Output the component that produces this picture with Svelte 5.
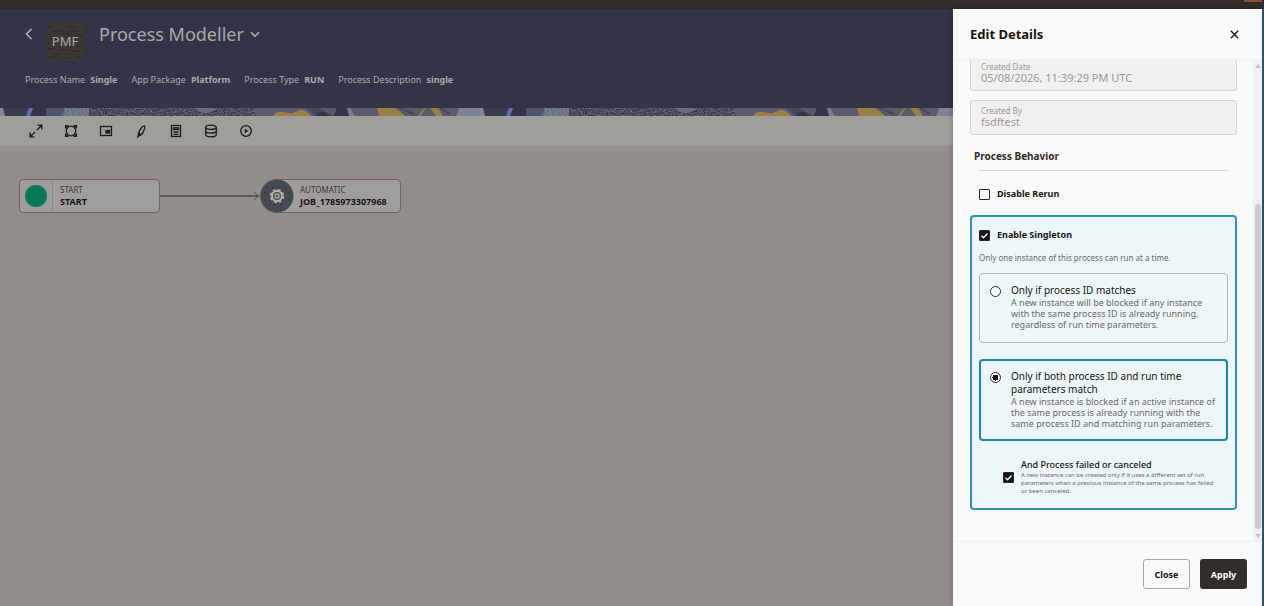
<script>
  const facts = [
    ['Process Name', 'Single'],
    ['App Package', 'Platform'],
    ['Process Type', 'RUN'],
    ['Process Description', 'single']
  ];
  let disableRerun = $state(false);
  let singleton = $state(true);
  let failed = $state(true);
  let mode = $state('both');
</script>

<div class="page">
  <div class="topbar"><span class="chip"></span></div>

  <div class="body">
    <main>
      <header>
        <div class="title-row">
          <button class="back" aria-label="Back">
            <svg width="8" height="12" viewBox="0 0 8 12"><path d="M6.5 1 1.500 6l5 5" /></svg>
          </button>
          <div class="badge">
            <svg width="38" height="38" viewBox="0 0 38 38" aria-hidden="true">
              <path d="M11 2h8M2 5h6M20 5h10M5 9h12M24 9h9M1 13h4M14 12h12M30 14h7M3 17h8M2 22h3M31 20h6M33 25h4M2 27h7M12 28h10M26 29h8M5 32h9M18 32h12M2 35h7M14 36h10M29 35h6" />
            </svg>
            <span>PMF</span>
          </div>
          <h1>
            <button class="title">
              Process Modeller
              <svg width="10" height="7" viewBox="0 0 10 7"><path d="M1 1.200l4 4 4-4" /></svg>
            </button>
          </h1>
        </div>
        <dl>
          {#each facts as [name, value]}
            <div><dt>{name}</dt><dd>{value}</dd></div>
          {/each}
        </dl>
      </header>

      <svg class="band" height="8" aria-hidden="true">
        <defs>
          <filter id="grain" x="0" y="0" width="100%" height="100%">
            <feTurbulence type="fractalNoise" baseFrequency="0.7" numOctaves="2" seed="4" />
            <feColorMatrix values="0 0 0 0 0.42  0 0 0 0 0.44  0 0 0 0 0.52  2 0 0 0 -0.7" />
          </filter>
          <pattern id="tile" width="480" height="8" patternUnits="userSpaceOnUse">
            <rect width="480" height="8" fill="#393c4b" />
            <path d="M0 0h3l2 8H0z" fill="#7f8397" />
            <path d="M29 0h4l-3 8h-4z" fill="#5872a3" />
            <path d="M34 0h12v8H31z" fill="#323547" />
            <path d="M46 0h20l-4 8H46z" fill="#50546a" />
            <path d="M65 0h24v8H61z" fill="#606879" />
            <path d="M89 0h166v8H89z" fill="#343749" />
            <rect x="64" width="191" height="8" filter="url(#grain)" opacity="0.6" />
            <path d="M195 0h21q-4 5-10 5t-11-5z" fill="#70748a" opacity="0.8" />
            <path d="M255 0h82l-3 8h-79z" fill="#565a6b" />
            <path d="M306 0h14l14 8h-18z" fill="#434759" />
            <path d="M273 8c4-6 9-4 16-3 7 1 9-4 14-3 4 1 6 4 8 6z" fill="#9a7f46" />
            <path d="M316 8c1-6 10-6 13 0z" fill="#323547" />
            <path d="M337 0h10l2 8h-15z" fill="#323547" />
            <path d="M347 0h4l4 8h-6z" fill="#747a8e" />
            <path d="M351 0h108l-3 8H355z" fill="#565a6b" />
            <path d="M388 0l18 8M400 0l14 6M434 2l10 6M440 0l10 6" stroke="#434759" stroke-width="2" />
            <path d="M377 0h18l11 8h-27z" fill="#9a7f46" />
            <path d="M424 0h2l-6 8h-2zM430 0h8l5 8h-7z" fill="#9a7f46" />
            <path d="M459 0h21v8h-24z" fill="#7f8397" />
          </pattern>
        </defs>
        <rect width="100%" height="8" fill="url(#tile)" />
      </svg>

      <div class="toolbar" role="toolbar" aria-label="Canvas tools">
        <button aria-label="Expand">
          <svg viewBox="0 0 14 14"><path d="M8 6l5-5M8.500 1.200h4.300V5.500M6 8l-5 5M1.200 8.500v4.300h4.300" /></svg>
        </button>
        <button aria-label="Fit to view">
          <svg viewBox="0 0 14 14"><circle cx="7" cy="7" r="4.800" /><path d="M1.600 4.500V1.600h2.900M9.500 1.600h2.900v2.900M12.400 9.500v2.900H9.500M4.500 12.400H1.600V9.500M1.600 1.600l2.500 2.500M12.400 1.600 9.900 4.100M12.400 12.400 9.900 9.900M1.600 12.400l2.500-2.500" /></svg>
        </button>
        <button aria-label="Overview">
          <svg viewBox="0 0 14 14"><rect x="1.500" y="2.500" width="11" height="9" /><rect x="7" y="6.500" width="3.500" height="2.500" fill="#1c1a18" /></svg>
        </button>
        <button aria-label="Edit">
          <svg viewBox="0 0 14 14"><path d="M8.500 2.500 10.500 1.800l.3 2.200-2 5-2.300 2-1.700-1.200.7-3.200z" /><path d="M4.800 9.200l2 1.600-3 2z" fill="#1c1a18" /></svg>
        </button>
        <button aria-label="Parameters">
          <svg viewBox="0 0 14 14"><rect x="2.500" y="1.500" width="9" height="11" /><path d="M4.500 3.800h5v1.700h-5zM4.500 8h5M4.500 10.300h5" /></svg>
        </button>
        <button aria-label="Data">
          <svg viewBox="0 0 14 14"><ellipse cx="7" cy="3.300" rx="5.300" ry="2.100" /><path d="M1.700 3.300v7.400c0 2.800 10.600 2.800 10.600 0V3.300M1.700 7c0 2.800 10.600 2.800 10.600 0" /></svg>
        </button>
        <button aria-label="Run">
          <svg viewBox="0 0 14 14"><circle cx="7" cy="7" r="5.300" /><path d="M5.700 4.800 9.300 7 5.700 9.200z" fill="#1c1a18" stroke="none" /></svg>
        </button>
      </div>

      <section class="canvas" aria-label="Process canvas">
        <div class="node start">
          <span class="icon-cell"><i></i></span>
          <p><span>START</span><b>START</b></p>
        </div>
        <svg class="link" width="100" height="12" viewBox="0 0 100 12" aria-hidden="true">
          <path d="M0 6h99" stroke-width="1.500" /><path d="M94 2l4 4-4 4" />
        </svg>
        <div class="node auto">
          <svg class="gear" width="34" height="34" viewBox="0 0 34 34" aria-hidden="true">
            <circle cx="17" cy="17" r="16.500" fill="#454b50" />
            <path d="M6 9h22M4 14h26M4 21h26M8 26h18" stroke="#343c48" stroke-width="1.500" stroke-dasharray="2 4" />
            <circle cx="17" cy="17" r="6.500" fill="none" stroke="#b5b3b0" stroke-width="1.500" stroke-dasharray="3 2.100" />
            <circle cx="17" cy="17" r="5" fill="none" stroke="#b5b3b0" stroke-width="2" />
            <circle cx="17" cy="17" r="2" fill="none" stroke="#b5b3b0" stroke-width="1.300" />
          </svg>
          <p><span>AUTOMATIC</span><b>JOB_1785973307968</b></p>
        </div>
      </section>
    </main>

    <aside>
      <div class="head">
        <h2>Edit Details</h2>
        <button class="x" aria-label="Close panel">
          <svg width="9" height="9" viewBox="0 0 9 9"><path d="M.8.8l7.400 7.400M8.200.8.800 8.200" /></svg>
        </button>
      </div>

      <div class="scroller">
        <div class="content">
          <div class="field cut">
            <label for="cdate">Created Date</label>
            <input id="cdate" value="05/08/2026, 11:39:29 PM UTC" readonly />
          </div>
          <div class="field">
            <label for="cby">Created By</label>
            <input id="cby" value="fsdftest" readonly />
          </div>

          <h3>Process Behavior</h3>
          <hr />

          <label class="check rerun"><input type="checkbox" bind:checked={disableRerun} />Disable Rerun</label>

          <div class="singleton">
            <label class="check"><input type="checkbox" bind:checked={singleton} />Enable Singleton</label>
            <p class="hint">Only one instance of this process can run at a time.</p>

            <label class="option" class:on={mode === 'id'}>
              <input type="radio" name="mode" value="id" bind:group={mode} />
              <span>
                <strong>Only if process ID matches</strong>
                <small>A new instance will be blocked if any instance with the same process ID is already running, regardless of run time parameters.</small>
              </span>
            </label>

            <label class="option" class:on={mode === 'both'}>
              <input type="radio" name="mode" value="both" bind:group={mode} />
              <span>
                <strong>Only if both process ID and run time parameters match</strong>
                <small>A new instance is blocked if an active instance of the same process is already running with the same process ID and matching run parameters.</small>
              </span>
            </label>

            <label class="sub">
              <input type="checkbox" bind:checked={failed} />
              <span>
                <strong>And Process failed or canceled</strong>
                <small>A new instance can be created only if it uses a different set of run parameters when a previous instance of the same process has failed or been canceled.</small>
              </span>
            </label>
          </div>
        </div>
        <div class="bar" aria-hidden="true"><i class="up"></i><i class="thumb"></i><i class="down"></i></div>
      </div>

      <footer>
        <button class="close">Close</button>
        <button class="apply">Apply</button>
      </footer>
    </aside>
    <div class="edge"></div>
  </div>
</div>

<style>
  :global(body) { margin: 0; }
  * { box-sizing: border-box; }
  .page {
    height: 100vh;
    display: flex;
    flex-direction: column;
    font-family: "Noto Sans", "Open Sans", sans-serif;
    font-size: 10px;
    color: #161513;
  }
  h1, h2, h3, p, dl, dd { margin: 0; }
  button { font: inherit; color: inherit; background: none; border: 0; padding: 0; }
  svg { display: block; fill: none; }
  .topbar { height: 9px; background: #312d2a; display: flex; justify-content: flex-end; flex: none; }
  .chip { width: 18px; height: 2px; margin-right: 2px; background: #8a5231; }
  .body { flex: 1; min-height: 0; display: flex; }
  main { flex: 1; min-width: 0; display: flex; flex-direction: column; background: #928e8b; }

  header { background: #323547; color: #aaa9a9; padding: 12px 25px 20px; height: 99px; flex: none; }
  .title-row { display: flex; align-items: flex-start; height: 40px; }
  .back { margin-top: 7px; width: 8px; height: 12px; }
  .back svg, .title svg { stroke: #b5b3b2; stroke-width: 1.500; }
  .badge { display: grid; place-items: center; width: 38px; height: 38px; margin: 1px 15px 0 13px; border-radius: 4px; background: #3d3733; overflow: hidden; }
  .badge > * { grid-area: 1 / 1; }
  .badge svg { stroke: #2f2a28; stroke-width: 1; }
  .badge span { font-size: 13px; line-height: 16px; color: #aaa9a9; }
  h1 { font-size: 18px; line-height: 26px; font-weight: 400; }
  .title { display: flex; align-items: center; gap: 6px; }
  dl { display: flex; gap: 14px; margin-top: 11px; line-height: 16px; font-size: 9px; }
  dl div { display: flex; gap: 5px; }
  dd { font-weight: 700; }
  .band { width: 100%; flex: none; }

  .toolbar { display: flex; gap: 21px; align-items: center; height: 30px; flex: none; padding-left: 29px; background: #a09e9b; border-bottom: 1px solid #999693; }
  .toolbar svg { width: 14px; height: 14px; stroke: #1c1a18; stroke-width: 1.300; }
  .canvas { flex: 1; display: flex; align-items: flex-start; padding: 33px 19px; }
  .node { width: 141px; height: 34px; display: flex; align-items: center; background: #a09e9c; border: 1px solid #6b6866; border-radius: 4px; }
  .node p { display: flex; flex-direction: column; line-height: 12px; font-size: 8px; color: #3d3a38; }
  .node b { color: #161513; font-size: 9px; }
  .icon-cell { width: 33px; height: 32px; display: grid; place-items: center; border-right: 1px solid #8b8885; margin-right: 7px; }
  .icon-cell i { width: 22px; height: 22px; border-radius: 50%; background: #067a57; }
  .link { margin-top: 11px; flex: none; stroke: #4c4947; }
  .auto { border-radius: 17px 4px 4px 17px; }
  .gear { margin: 0 6px 0 -1px; flex: none; }

  aside { width: 309px; flex: none; display: flex; flex-direction: column; background: #fbf9f8; box-shadow: 0 0 6px rgba(0, 0, 0, 0.3); }
  .edge { width: 2px; flex: none; background: #235468; }
  .head { height: 51px; flex: none; display: flex; align-items: center; justify-content: space-between; padding: 0 23px 0 17px; border-bottom: 1px solid #f1efed; }
  h2 { font-size: 13px; line-height: 18px; font-weight: 700; }
  .x svg { stroke: #161513; stroke-width: 1.300; }
  .scroller { flex: 1; min-height: 0; display: flex; overflow: hidden; }
  .content { flex: 1; padding: 0 16px 0 17px; }
  .bar { width: 9px; background: #f1f0ef; display: flex; flex-direction: column; align-items: center; padding: 4px 0 3px; }
  .up, .down { border: 3px solid transparent; }
  .up { border-bottom: 4px solid #c4c2c0; border-top: 0; }
  .down { border-top: 4px solid #c4c2c0; border-bottom: 0; margin-top: 5px; }
  .thumb { width: 6px; flex: 1; margin-top: 136px; border-radius: 3px; background: #cfcdcb; }

  .field { height: 35px; padding: 4px 10px; border: 1px solid #d4d3d1; border-radius: 3px; background: #f1f0ee; color: #9a9997; margin-bottom: 9px; }
  .field.cut { height: 31px; border-top: 0; border-radius: 0 0 3px 3px; padding-top: 1px; }
  .field label { display: block; font-size: 8px; line-height: 11px; }
  .field input { display: block; width: 100%; padding: 0; border: 0; outline: 0; background: none; font: inherit; font-size: 11px; line-height: 12px; height: 12px; color: inherit; }
  h3 { font-size: 10px; line-height: 16px; padding: 4px 0 6px 4px; font-weight: 700; color: #312d2a; }
  hr { margin: 0 9px; border: 0; border-top: 1px solid #d6d4d2; }

  input[type='checkbox'], input[type='radio'] { appearance: none; margin: 0; width: 11px; height: 11px; flex: none; border: 1px solid #2b2826; background: #fff; }
  input[type='checkbox'] { border-radius: 1px; }
  input[type='checkbox']:checked {
    background: #161513 url("data:image/svg+xml,%3Csvg xmlns='http://www.w3.org/2000/svg' viewBox='0 0 9 9'%3E%3Cpath d='M1.500 4.700l2 2 4-4.200' fill='none' stroke='white' stroke-width='1.300'/%3E%3C/svg%3E");
  }
  input[type='radio'] { border-radius: 50%; }
  input[type='radio']:checked { background: radial-gradient(circle, #161513 3px, #fff 3px); }
  .check { display: flex; align-items: center; gap: 7px; font-size: 9px; font-weight: 700; line-height: 16px; }
  .rerun { padding: 15px 9px 13px; }
  .singleton { border: 2px solid #2b93b4; border-radius: 4px; background: #edf7fa; padding: 10px 7px 13px; }
  .hint { font-size: 8px; line-height: 12px; margin: 9px 0; color: #6b6967; }
  .option { display: flex; gap: 10px; padding: 10px 8px 9px 10px; border: 1px solid #b0b6b8; border-radius: 4px; margin-bottom: 16px; height: 70px; }
  .option.on { border: 2px solid #1c84a8; padding: 9px 7px 8px 9px; height: 82px; }
  .option input { margin-top: 2px; }
  .option strong, .option small { display: block; font-weight: 400; }
  .option strong { font-size: 10px; line-height: 13px; }
  .option small { font-size: 9px; line-height: 11px; color: #6b6967; }
  .sub { display: flex; align-items: center; gap: 7px; padding: 2px 10px 0 24px; }
  .sub strong { display: block; font-size: 9px; line-height: 12px; font-weight: 500; }
  .sub small { display: block; font-size: 6px; line-height: 8px; color: #6b6967; }

  footer { height: 65px; flex: none; border-top: 1px solid #f1efed; display: flex; justify-content: flex-end; align-items: center; gap: 10px; padding-right: 15px; }
  footer button { height: 30px; width: 47px; border-radius: 3px; font-size: 9px; font-weight: 700; }
  .close { border: 1px solid #a9a7a5; }
  .apply { background: #312d2a; color: #fff; }
</style>
